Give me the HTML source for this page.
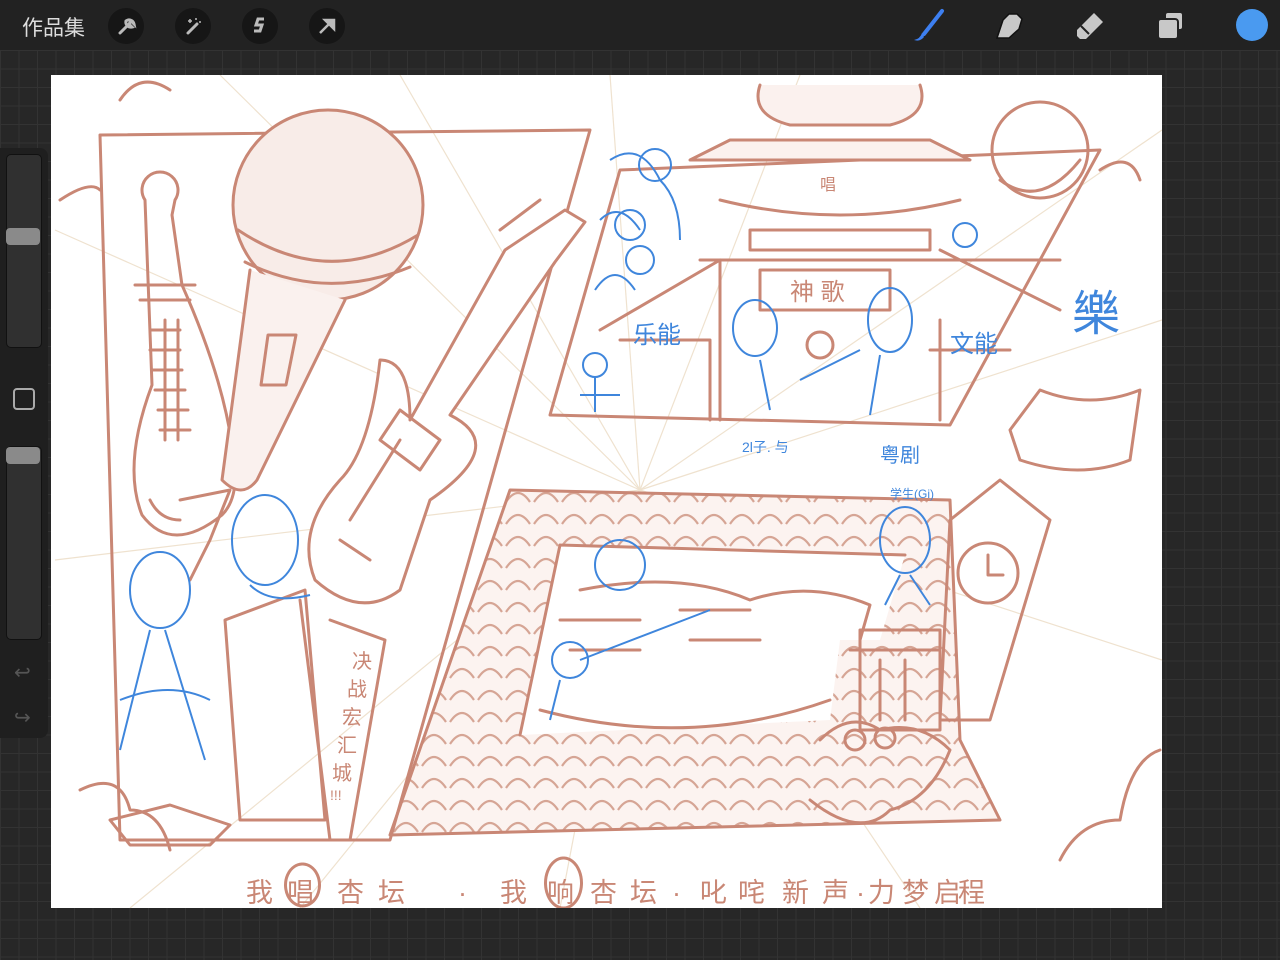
<!DOCTYPE html>
<html><head><meta charset="utf-8"><style>
html,body{margin:0;padding:0;width:1280px;height:960px;overflow:hidden;background:#262626;font-family:"Liberation Sans","Noto Sans CJK SC",sans-serif;}
.grid{position:absolute;left:0;top:50px;width:1280px;height:910px;background-color:#272727;background-image:linear-gradient(#333 1px,transparent 1px),linear-gradient(90deg,#333 1px,transparent 1px);background-size:18.5px 18.5px;}
.top{position:absolute;left:0;top:0;width:1280px;height:50px;background:#222;}
.title{position:absolute;left:22px;top:12px;color:#ddd;font-size:21px;}
.btn{position:absolute;top:8px;width:36px;height:36px;border-radius:50%;background:#161616;}
.side{position:absolute;left:0;top:148px;width:48px;height:590px;background:#1f1f1f;border-radius:0 8px 8px 0;}
.sl{position:absolute;left:6px;width:34px;background:#303030;border:1px solid #111;border-radius:5px;}
.knob{position:absolute;left:6px;width:34px;height:17px;background:#8a8a8a;border-radius:4px;}
.canvas{position:absolute;left:51px;top:75px;width:1111px;height:833px;background:#fff;}
</style></head><body>
<div class="top">
<div class="title">作品集</div>
<div class="btn" style="left:108px"><svg width="36" height="36"><path d="M12 25 L19 18 M18 13 a5 5 0 0 0 6 6 l-3-3 2-3 3 3 a5 5 0 0 0-8-3" stroke="#bbb" stroke-width="3" fill="none" stroke-linecap="round"/></svg></div>
<div class="btn" style="left:175px"><svg width="36" height="36"><path d="M13 25 L22 16" stroke="#bbb" stroke-width="3" stroke-linecap="round"/><path d="M15 11v4M13 13h4M21 10v2M24 14h2" stroke="#bbb" stroke-width="1.5"/></svg></div>
<div class="btn" style="left:242px"><svg width="36" height="36"><path d="M22 11 h-6 l-2 6 h6 l-2 6 h-6" stroke="#bbb" stroke-width="3" fill="none"/></svg></div>
<div class="btn" style="left:309px"><svg width="36" height="36"><path d="M11 25 L22 14 M16 12 h9 v9 z" stroke="#bbb" stroke-width="2.5" fill="#bbb"/></svg></div>
<svg style="position:absolute;left:910px;top:6px" width="40" height="38"><path d="M32 5 L14 28" stroke="#3d7ff0" stroke-width="4" stroke-linecap="round"/><path d="M12 27 q-2 6-8 7 q6 2 10-3z" fill="#3d7ff0"/></svg>
<svg style="position:absolute;left:992px;top:8px" width="38" height="36"><path d="M5 30 l6-18 l6-6 h8 l5 5 l-3 10 l-10 9 h-6 z" fill="#c8c8c8" stroke="#111" stroke-width="1.5"/></svg>
<svg style="position:absolute;left:1072px;top:8px" width="38" height="34"><path d="M5 22 l17-17 l9 9 l-17 17 h-6 l-3-3z" fill="#c8c8c8"/><path d="M9 18 l8 8" stroke="#222" stroke-width="2"/></svg>
<svg style="position:absolute;left:1155px;top:10px" width="34" height="32"><rect x="10" y="2" width="18" height="18" rx="3" fill="#c8c8c8" stroke="#222" stroke-width="2"/><rect x="3" y="9" width="20" height="20" rx="3" fill="#c8c8c8" stroke="#222" stroke-width="2"/></svg>
<div style="position:absolute;left:1236px;top:9px;width:32px;height:32px;border-radius:50%;background:#4a9af0;"></div>
</div>
<div class="grid"></div>
<div class="side">
<div class="sl" style="top:6px;height:192px"></div><div class="knob" style="top:80px"></div>
<div style="position:absolute;left:13px;top:240px;width:18px;height:18px;border:2px solid #aaa;border-radius:4px"></div>
<div class="sl" style="top:298px;height:192px"></div><div class="knob" style="top:299px"></div>
<div style="position:absolute;left:14px;top:512px;color:#555;font-size:20px">↩</div>
<div style="position:absolute;left:14px;top:557px;color:#555;font-size:20px">↪</div>
</div>
<div class="canvas">
<svg width="1111" height="833" viewBox="51 75 1111 833" xmlns="http://www.w3.org/2000/svg">
<defs>
<pattern id="sc" width="28" height="22" patternUnits="userSpaceOnUse">
<rect width="28" height="22" fill="#fcf3f0"/>
<path d="M2 18 q12-18 24 0" stroke="#d6a595" stroke-width="2.2" fill="none"/>
</pattern>
</defs>
<g stroke="#efe2cf" stroke-width="1.2">
<line x1="640" y1="490" x2="55" y2="230"/><line x1="640" y1="490" x2="55" y2="560"/><line x1="640" y1="490" x2="130" y2="908"/><line x1="640" y1="490" x2="300" y2="908"/><line x1="640" y1="490" x2="220" y2="75"/><line x1="640" y1="490" x2="400" y2="75"/><line x1="640" y1="490" x2="610" y2="75"/><line x1="640" y1="490" x2="800" y2="75"/><line x1="640" y1="490" x2="1162" y2="130"/><line x1="640" y1="490" x2="1162" y2="320"/><line x1="640" y1="490" x2="1162" y2="660"/><line x1="640" y1="490" x2="920" y2="908"/><line x1="640" y1="490" x2="560" y2="908"/>
</g>
<path d="M510 490 L950 500 L960 740 L1000 820 L390 835 Z" fill="url(#sc)"/>
<path d="M560 545 L905 555 L880 640 L840 640 L830 720 L520 735 z" fill="#fff"/>
<g stroke="#c98775" stroke-width="3" fill="none" stroke-linecap="round" stroke-linejoin="round">
<path d="M100 135 L590 130 L390 840 L120 840 Z"/>
<path d="M120 100 q20-30 50-10 M60 200 q30-20 40-10"/>
<path d="M145 200 a18 18 0 1 1 30 0 l-3 15 l10 70 q40 90 50 160 q10 50 -10 70 q-50 40 -80 0 q-20-50 10-130 z"/>
<path d="M135 285 h60 M140 300 h50 M150 330 h30 M150 350 h30 M152 370 h30 M155 390 h30 M158 410 h30 M160 430 h30 M165 320 v120 M178 320 v120"/>
<path d="M150 500 q10 20 30 20"/>
<circle cx="328" cy="205" r="95" fill="#f8ece8"/>
<path d="M238 230 q90 60 180 5 M245 262 q80 40 165 5"/>
<path d="M250 270 L222 480 q20 20 35 0 L345 300" fill="#faf1ee"/>
<path d="M268 335 h28 l-10 50 h-25 z"/>
<path d="M180 500 l50-10 l-20 50 l-20 40"/>
<path d="M565 210 l20 12 l-30 40 L450 415 q60 30 -20 85 q-10 30 -30 90 q-40 30 -85-10 q-20-50 25-100 q30-30 40-120 q30 0 30 60 L505 250 z" fill="#fff"/>
<path d="M500 230 l40-30 M350 520 l50-80 M340 540 l30 20 M400 410 l40 30 l-20 30 l-40-30z"/>
<path d="M620 170 L1100 150 L950 425 L550 415 Z"/>
<path d="M760 85 q-10 30 30 40 l100 0 q40-10 30-40 M730 140 l200 0 l40 20 h-280 z" fill="#fbf1ee"/>
<path d="M720 200 q120 30 240 0 M750 230 h180 v20 h-180 z M700 260 h360 M760 270 h130 v40 h-130 z"/>
<path d="M600 330 l120-70 v160 M940 250 l120 60 M620 340 h90 v80 M940 320 v100 M930 350 h80"/>
<circle cx="820" cy="345" r="13"/>
<circle cx="1040" cy="150" r="48"/>
<path d="M1000 180 q40 30 80-20 M1100 170 q30-20 40 10"/>
<path d="M1010 430 l30-40 q50 20 100 0 l-10 70 q-50 20 -110 0 z M1000 480 L950 520 L940 720 L990 720 L1050 520 Z"/>
<circle cx="988" cy="573" r="30"/>
<path d="M988 555 v20 h15"/>
<path d="M510 490 L950 500 L960 740 L1000 820 L390 835 Z"/>
<path d="M560 545 L905 555 M520 735 L560 545 M580 590 q100-20 170 10 q60-20 120 5 L860 640 M540 710 q150 40 290-10"/>
<path d="M560 620 h80 M570 650 h70 M680 610 h70 M690 640 h70"/>
<path d="M225 620 l80-30 l20 230 h-85 z M300 600 l30 240 M330 620 l55 20 l-35 200"/>
<path d="M110 820 l60-15 l60 20 l-20 20 h-80 z"/>
<path d="M860 630 h80 v100 h-80 z M850 650 h90 M880 660 v60 M905 660 v60"/>
<path d="M820 740 q30-30 60-10 q40-10 70 20 q-20 50 -60 60 q-30 30 -80-10"/>
<circle cx="855" cy="740" r="10"/><circle cx="885" cy="738" r="10"/>
<path d="M80 790 q40-20 50 20 q30 0 40 40 M1060 860 q20-40 60-40 q10-60 40-70"/>
<path d="M302 864 a17 21 0 1 0 1 0 M563 858 a18 25 0 1 0 1 0"/>
</g>
<g stroke="#3f86dc" stroke-width="2" fill="none">
<ellipse cx="160" cy="590" rx="30" ry="38"/><path d="M150 630 l-30 120 M165 630 l40 130 M120 700 q50-20 90 0"/>
<ellipse cx="265" cy="540" rx="33" ry="45"/><path d="M250 585 q20 20 60 10"/>
<ellipse cx="755" cy="328" rx="22" ry="28"/><ellipse cx="890" cy="320" rx="22" ry="32"/><path d="M760 360 l10 50 M880 355 l-10 60 M800 380 l60-30"/>
<circle cx="595" cy="365" r="12"/><path d="M595 377 v35 M580 395 h40"/>
<circle cx="965" cy="235" r="12"/>
<circle cx="620" cy="565" r="25"/><circle cx="570" cy="660" r="18"/><path d="M560 680 l-10 40 M580 660 l130-50"/>
<ellipse cx="905" cy="540" rx="25" ry="33"/><path d="M900 575 l-15 30 M910 575 l20 30"/>
<path d="M610 160 q30-20 50 20 q20 20 20 60 M600 220 q20-20 40 10 M595 290 q20-30 40 0"/>
<circle cx="655" cy="165" r="16"/><circle cx="630" cy="225" r="15"/><circle cx="640" cy="260" r="14"/>
</g>
<g font-family="'Liberation Sans','Noto Sans CJK SC',sans-serif">
<text x="633" y="343" fill="#3f86dc" font-size="24">乐能</text>
<text x="950" y="352" fill="#3f86dc" font-size="24">文能</text>
<text x="1072" y="330" fill="#3f86dc" font-size="48">樂</text>
<text x="790" y="300" fill="#c98775" font-size="24">神 歌</text>
<text x="820" y="190" fill="#c98775" font-size="16">唱</text>
<text x="742" y="452" fill="#3f86dc" font-size="14">2l子.   与</text>
<text x="880" y="462" fill="#3f86dc" font-size="20">粤剧</text>
<text x="890" y="498" fill="#3f86dc" font-size="12">学生(Gi)</text>
<g fill="#c98775" font-size="20"><text x="352" y="668">决</text><text x="347" y="696">战</text><text x="342" y="724">宏</text><text x="337" y="752">汇</text><text x="332" y="780">城</text><text x="330" y="800" font-size="14">!!!</text></g>
<text y="902" fill="#c98775" font-size="27" x="246 287 337 378 458 500 547 590 630 672 700 738 782 822 856 868 902 934 958">我唱杏坛·我响杏坛·叱咤新声·力梦启程</text>
</g>
</svg>
</div>
</body></html>
